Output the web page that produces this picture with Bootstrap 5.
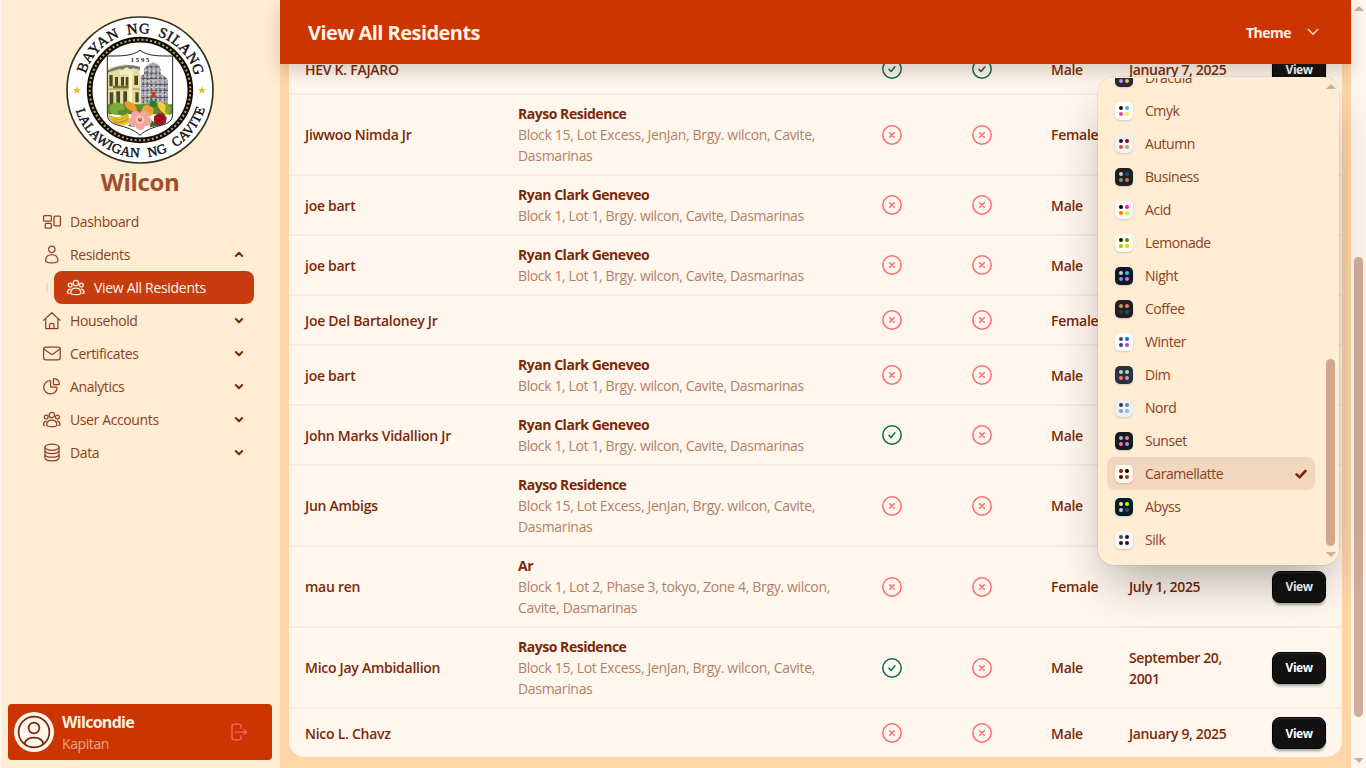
<!DOCTYPE html>
<html lang="en">
<head>
<meta charset="utf-8">
<meta name="viewport" content="width=device-width, initial-scale=1">
<title>View All Residents</title>
<link rel="stylesheet" href="https://cdn.jsdelivr.net/npm/bootstrap@5.3.0/dist/css/bootstrap.min.css">
<style>
:root{--base1:#fff7ed;--base2:#feecd3;--base3:#ffd6a7;--ink:#7c2808;--accent:#ca3500;--thumb:#d0ae9c}
body{font-family:"Open Sans","Noto Sans",sans-serif;font-size:14px;line-height:21px;color:var(--ink);background:var(--base1);height:768px;overflow:hidden}
svg{display:block;flex:none}
.stroke-icon{fill:none;stroke:currentColor;stroke-width:1.25;stroke-linecap:round;stroke-linejoin:round}
.sidebar{width:278px;margin-left:2px;background:var(--base2)}
.seal{margin:16px auto 0 64.3px;width:148px;height:148px}
.brand-name{font-size:24px;line-height:32px;font-weight:700;color:#a04f2d;margin-top:2px;letter-spacing:-.35px;padding-right:2px}
.menu{margin-top:7px;padding:0 24px 0 40px}
.menu-item{height:33px;gap:8px;color:#8c4123;letter-spacing:-.38px}
.menu-item span{margin-top:-1px}
.menu-item.lead-sub{margin-left:12px;margin-right:2px;padding:0 12px;border-radius:8px;background:#c83d10;color:#fff3e8;letter-spacing:-.3px}
.sub-wrap{position:relative}
.sub-wrap::before{content:"";position:absolute;left:4px;top:12px;width:2px;height:9px;background:#f1d9c0}
.chev{margin-left:auto;margin-right:12px;color:var(--ink)}
.user-card{margin:0 8px 8px 6px;height:56px;border-radius:4px;background:var(--accent);padding:0 24px 0 6px;gap:8px}
.avatar-ring{width:40px;height:40px;background:var(--base1);color:var(--ink)}
.user-name{font-size:16px;font-weight:700;color:#fff1e2;letter-spacing:-.7px;line-height:22px}
.user-role{color:#eda588;letter-spacing:-.4px;line-height:21px}
.content{width:1071px;background:var(--base3);position:relative}
.topbar{height:64px;background:var(--accent);color:#fff3e6;padding:0 28px;box-shadow:0 8px 16px rgba(60,40,20,.2);position:relative;z-index:2}
.topbar h1{font-size:20px;font-weight:700;margin:2px 0 0;letter-spacing:-.54px}
.theme-btn{font-weight:700;gap:15px;letter-spacing:-.5px;margin-right:3px}
.list-area{height:704px;padding:0 9px 11px}
.sheet{background:var(--base1);border-radius:0 0 16px 16px}
.residents{table-layout:fixed;width:1053px;color:var(--ink)}
.residents td{padding:0 16px;vertical-align:middle;border-bottom:2px solid #f8ebdf;font-weight:600;letter-spacing:-.27px;white-space:nowrap}
.residents tr:last-child td{border-bottom:0}
.residents td.date-cell{letter-spacing:-.37px}
.residents .mark-cell{padding:0}
.mark-cell svg{margin:0 auto}
.place{font-weight:700;letter-spacing:-.47px}
.addr{font-weight:400;color:#b37f68;letter-spacing:-.32px}
.addr.one-line{letter-spacing:-.38px}
.ok-mark{color:#0b6b4c}.no-mark{color:#ff6a6e}
.view-btn{width:54px;height:32px;border:1.5px solid #000;border-radius:8px;background:#121212;color:#fff;font-size:12px;font-weight:700;padding:1px 0 0;line-height:1;box-shadow:inset 0 1px 0 #2c2c2c,0 3px 3px -1px rgba(0,0,0,.35);letter-spacing:-.5px}
.view-btn:hover{background:#222;color:#fff}
.theme-menu{position:absolute;z-index:3;right:12px;top:77px;width:241px;height:488px;background:var(--base2);border:0;border-radius:16px;box-shadow:0 0 0 1px rgba(0,0,0,.06),0 24px 48px -10px rgba(0,0,0,.32);overflow:hidden;padding:1px 0 9px 9px}
.theme-list{width:208px;overflow:hidden}
.theme-item{height:33px;flex:none;padding:0 8px;border-radius:8px;gap:12px;color:#8c4123;letter-spacing:-.45px}
.theme-item.is-on{background:#f1d7bd}
.swatch{width:18px;height:18px;border-radius:5px;display:grid;grid-template-columns:4px 4px;gap:2px;place-content:center;box-shadow:0 1px 2px rgba(0,0,0,.15)}
.swatch i{width:4px;height:4px;border-radius:50%}
.menu-bar{margin-left:10px;width:11px;padding:6px 0 0}
.menu-bar .thumb{width:9px;height:187px;border-radius:5px;background:#d0a88c}
.tri-up,.tri-down{border:5px solid transparent;width:0;height:0}
.tri-up{border-top:0;border-bottom-color:var(--thumb)}
.tri-down{border-bottom:0;border-top-color:var(--thumb)}
.menu-bar .tri-down{margin-top:6px;margin-bottom:-1px}
.page-bar{width:15px;background:var(--base1);padding:6px 0 5px}
.page-bar .thumb{width:9px;height:460px;margin-top:246px;border-radius:5px;background:var(--thumb)}
</style>
</head>
<body>
<svg width="0" height="0" class="position-absolute">
<symbol id="i-dash" viewBox="0 0 20 20"><rect x="1.6" y="3.6" width="7.8" height="5.6" rx="1"/><rect x="3.2" y="11.4" width="6.2" height="4.8" rx="1"/><rect x="12" y="4.2" width="6.4" height="9.6" rx="1"/></symbol>
<symbol id="i-user" viewBox="0 0 20 20"><circle cx="9.8" cy="4.3" r="3.2"/><path d="M3.6 15.700c0-3.700 2.700-6.200 6.200-6.200s6.200 2.500 6.200 6.200c0 2.800-12.400 2.800-12.400 0z"/></symbol>
<symbol id="i-users" viewBox="0 0 20 20"><circle cx="9.8" cy="5.1" r="2.7"/><circle cx="4.2" cy="7.1" r="1.9"/><circle cx="15.4" cy="7.1" r="1.9"/><path d="M4.800 14.900c0-3 2.200-4.800 5-4.800s5 1.800 5 4.800c0 2.400-10 2.400-10 0zM4.200 11.100c-1.600.4-2.700 1.800-2.700 3.600 0 .4.9.7 1.600.8M15.400 11.100c1.600.4 2.700 1.800 2.700 3.600 0 .4-.9.7-1.600.8"/></symbol>
<symbol id="i-home" viewBox="0 0 20 20"><path d="M1.500 9.400 9.800 1.700l8.300 7.700M3.700 7.700v9.900h12.200V7.700M7.600 17.500v-3.400c0-1.100.7-1.800 1.700-1.800h1c1 0 1.700.7 1.700 1.800v3.400"/></symbol>
<symbol id="i-mail" viewBox="0 0 20 20"><rect x="1.600" y="3" width="16.600" height="12.800" rx="2"/><path d="m1.800 5.100 6.600 4.600c1 .6 2 .6 3 0L18 5.100"/></symbol>
<symbol id="i-pie" viewBox="0 0 20 20"><path d="M7.800 3.600a6.700 6.700 0 1 0 7.300 7.300c0-.5-.2-.7-.7-.7H9.200c-.4 0-.6-.2-.6-.6V4.300c0-.5-.3-.7-.8-.7z"/><path d="M11.400 2.300c0-.5.3-.8.800-.7a6 6 0 0 1 5.200 5.200c0 .5-.2.7-.7.7H12c-.4 0-.6-.2-.6-.6z"/></symbol>
<symbol id="i-data" viewBox="0 0 20 20"><ellipse cx="10" cy="4.200" rx="7.100" ry="3.100"/><path d="M2.900 4.200v10.600c0 4 14.200 4 14.200 0V4.200M2.900 7.600c0 4 14.200 4 14.200 0M2.900 11.200c0 4 14.200 4 14.200 0"/></symbol>
<symbol id="i-down" viewBox="0 0 10 10"><path d="m1.800 3 3.200 3.200L8.200 3"/></symbol>
<symbol id="i-up" viewBox="0 0 10 10"><path d="m1.800 6 3.200-3.200L8.200 6"/></symbol>
<symbol id="i-ok" viewBox="0 0 20 20"><circle cx="10" cy="10" r="9.200"/><path d="m6.900 10.300 2.200 2.200 3.800-4.700"/></symbol>
<symbol id="i-no" viewBox="0 0 20 20"><circle cx="10" cy="10" r="9.200"/><path d="m7.700 7.700 4.600 4.600M12.300 7.700l-4.600 4.600"/></symbol>
</svg>

<div class="d-flex h-100">
<aside class="sidebar d-flex flex-column">
  <svg class="seal" viewBox="34 35 444 444">
    <defs>
      <path id="arcTop" d="M86 257a170 170 0 0 1 340 0"/>
      <path id="arcBot" d="M54 257a202 202 0 0 0 404 0"/>
      <clipPath id="shieldClip"><path d="M160 157h193v170c0 24-14 30-34 36-24 6-48 12-63 28-14-16-38-22-62-28-20-6-34-12-34-36z"/></clipPath>
    </defs>
    <circle cx="256" cy="257" r="219" fill="#fff" stroke="#30341f" stroke-width="5"/>
    <circle cx="256" cy="257" r="151" fill="none" stroke="#0c0c0c" stroke-width="17"/>
    <circle cx="256" cy="257" r="151" fill="none" stroke="#c9a64b" stroke-width="6" stroke-dasharray="6 7"/>
    <g font-family="'Liberation Serif',serif" fill="#111" stroke="#111" stroke-width="1.300">
      <text font-size="44" word-spacing="10"><textPath href="#arcTop" startOffset="49" textLength="442">BAYAN NG SILANG</textPath></text>
      <text font-size="40" word-spacing="14"><textPath href="#arcBot" startOffset="62" textLength="516">LALAWIGAN NG CAVITE</textPath></text>
    </g>
    <path id="st" d="m67 246 3 8h9l-7 5 3 9-8-5-8 5 3-9-7-5h9z" fill="#e4bd2e"/>
    <use href="#st" x="375"/>
    <g clip-path="url(#shieldClip)">
      <path d="M157 140h200v260H157z" fill="#fff"/>
      <path d="M160 190l50-10 46 8v125h-96z" fill="#e5dda0"/>
      <path d="M158 200c20-14 70-24 98-12v8l-22-5-18 14-20-12-38 12z" fill="#777a70"/>
      <path d="M196 200l20-11 20 10v12h-40z" fill="#f0ebbd"/>
      <path d="M164 212h10v34h-10zm17 6h9v28h-9zm18 0h9v26h-9zm14 0h9v26h-9zm26-4h11v28h-11zM165 264h11v38h-11zm20-3h11v42h-11zm21 0h11v40h-11zm36 3h10v30h-10z" fill="#4a4b22"/>
      <path d="M175 244h54v9h-54z" fill="#706b3a"/><path d="M160 252h96v4h-96z" fill="#b8ab63"/>
      <path d="M222 205h10v100h-10z" fill="#faf5c4"/>
      <path d="M258 312v-98l10-6v-16l8-8 8-4 10-6 12 4 10 8v22l14 8 10 12v84z" fill="#a9a9ad"/>
      <g fill="none" stroke="#4b4d55" stroke-width="3"><path d="M260 222h76M268 206h50M262 240h78M260 258h80M260 280h80M274 188h38"/><path d="M266 212v90M278 188v112M290 184v110M304 184v110M316 194v110M330 218v84" stroke-dasharray="7 4"/></g>
      <g fill="none" stroke="#ececef" stroke-width="2"><path d="M262 230h74M270 198h46M262 250h78M262 270h78M272 212v90M284 188v100M298 186v100M310 190v100M324 218v80" stroke-dasharray="8 5"/></g>
      <path d="M160 300h194v30H160z" fill="#5f8a2c"/>
      <ellipse cx="187" cy="313" rx="22" ry="19" fill="#7cab38"/><ellipse cx="205" cy="325" rx="16" ry="9" fill="#5b8a28"/>
      <ellipse cx="228" cy="306" rx="22" ry="11" transform="rotate(35 228 306)" fill="#ed9a27"/>
      <circle cx="279" cy="319" r="18" fill="#eea232"/><path d="m284 305 4-26 8 12 10-8-2 14 13-2-17 14z" fill="#2f7a35"/><path d="M291 263h11v16h-11z" fill="#d33525"/>
      <ellipse cx="327" cy="312" rx="25" ry="11" transform="rotate(48 327 312)" fill="#f4cd35"/><path d="m335 292 14 18-4 24-14-12z" fill="#85a832"/>
      <path d="M162 330c20 14 40 8 58-4l8 26c-20 20-50 12-66-8z" fill="#e9c535"/><path d="M166 334c20 18 40 12 54-2M172 346c18 10 32 8 48-4M180 354c16 4 28 0 40-8" fill="none" stroke="#a8841f" stroke-width="2"/>
      <path d="m284 345 18 10 20 8-36 6zm-42 22-22-2 14-14z" fill="#2f6b2b"/>
      <path d="m298 336 14-10 16 2 8 12-2 14-12 10-16-2-8-10z" fill="#a31722"/><path d="M306 338c8-8 20 0 16 8s-14 6-12-2" fill="none" stroke="#5e0c14" stroke-width="3"/>
      <g fill="#f2a5a3"><circle cx="243" cy="333" r="14"/><circle cx="268" cy="332" r="14"/><circle cx="277" cy="351" r="14"/><circle cx="257" cy="363" r="14"/><circle cx="236" cy="352" r="14"/></g>
      <circle cx="256" cy="346" r="13" fill="#fac9c0"/><circle cx="256" cy="346" r="6" fill="#c83a4e"/><path d="m256 346 6-16" stroke="#e5c44c" stroke-width="4"/>
    </g>
    <path d="M158 155c40 0 74 1 98-17 24 18 58 17 98 17v172c0 24-14 30-34 36-24 6-48 14-64 30-16-16-40-24-64-30-20-6-34-12-34-36z" fill="none" stroke="#222" stroke-width="3"/>
    <text x="228" y="172" font-family="'Liberation Serif',serif" font-size="20" font-weight="700" fill="#222" textLength="56">1595</text>
  </svg>
  <div class="brand-name text-center">Wilcon</div>
  <nav class="menu d-flex flex-column" id="menu"></nav>
  <div class="user-card d-flex align-items-center mt-auto">
    <div class="avatar-ring rounded-circle d-flex align-items-center justify-content-center">
      <svg class="stroke-icon" width="34" height="34" viewBox="0 0 34 34" style="stroke-width:1.700"><circle cx="17" cy="17" r="15.400"/><circle cx="17" cy="13" r="5.400"/><path d="M7.600 29c1-5 5-6.300 9.400-6.300s8.400 1.300 9.400 6.300"/></svg>
    </div>
    <div><div class="user-name">Wilcondie</div><div class="user-role">Kapitan</div></div>
    <svg class="stroke-icon ms-auto" width="18" height="18" viewBox="0 0 18 18" style="color:#ff6266"><path d="M11 5.300V3.600C11 2 10 1.200 8.600 1.200H4.400C2.900 1.200 2 2 2 3.600v10.800c0 1.600.9 2.400 2.400 2.400h4.200c1.400 0 2.400-.8 2.400-2.400v-1.700M5.600 9h10.800M14 6.400 16.600 9 14 11.600"/></svg>
  </div>
</aside>

<main class="content d-flex flex-column">
  <header class="topbar d-flex align-items-center justify-content-between">
    <h1>View All Residents</h1>
    <div class="theme-btn d-flex align-items-center" role="button"><span>Theme</span>
      <svg class="stroke-icon" width="14" height="14" viewBox="0 0 14 14"><path d="m2.200 4.400 4.800 4.800 4.800-4.800"/></svg></div>
  </header>
  <section class="list-area d-flex flex-column justify-content-end overflow-hidden">
    <div class="sheet">
      <table class="residents">
        <colgroup><col style="width:213px"><col style="width:353px"><col style="width:74px"><col style="width:106px"><col style="width:78px"><col style="width:143px"><col style="width:86px"></colgroup>
        <tbody id="rows"></tbody>
      </table>
    </div>
  </section>
  <div class="theme-menu d-flex">
    <div class="theme-list d-flex flex-column justify-content-end" id="themes"></div>
    <div class="menu-bar d-flex flex-column align-items-center"><span class="tri-up"></span><span class="thumb mt-auto"></span><span class="tri-down"></span></div>
  </div>
</main>
<div class="page-bar d-flex flex-column align-items-center"><span class="tri-up"></span><span class="thumb"></span><span class="tri-down mt-auto"></span></div>
</div>

<script>
const icon = (id, size, cls, w) => `<svg class="stroke-icon ${cls || ''}" width="${size}" height="${size}"${w ? ` style="stroke-width:${w}"` : ''}><use href="#${id}"/></svg>`;

document.getElementById('menu').innerHTML = [
  ['i-dash', 'Dashboard'], ['i-user', 'Residents', 'i-up'], ['i-users', 'View All Residents', 'sub'],
  ['i-home', 'Household', 'i-down'], ['i-mail', 'Certificates', 'i-down'], ['i-pie', 'Analytics', 'i-down'],
  ['i-users', 'User Accounts', 'i-down'], ['i-data', 'Data', 'i-down']
].map(([ic, label, end]) => end === 'sub'
  ? `<div class="sub-wrap"><div class="menu-item lead-sub d-flex align-items-center">${icon(ic, 20)}<span>${label}</span></div></div>`
  : `<div class="menu-item d-flex align-items-center">${icon(ic, 20)}<span>${label}</span>${end ? icon(end, 10, 'chev', 2) : ''}</div>`).join('');

const rayso = ['Rayso Residence', 'Block 15, Lot Excess, JenJan, Brgy. wilcon, Cavite,<br>Dasmarinas'];
const ryan = ['Ryan Clark Geneveo', 'Block 1, Lot 1, Brgy. wilcon, Cavite, Dasmarinas'];
document.getElementById('rows').innerHTML = [
  [49, 'HEV K. FAJARO', null, 1, 1, 'Male', 'January 7, 2025'],
  [81, 'Jiwwoo Nimda Jr', rayso, 0, 0, 'Female', ''],
  [60, 'joe bart', ryan, 0, 0, 'Male', ''],
  [60, 'joe bart', ryan, 0, 0, 'Male', ''],
  [50, 'Joe Del Bartaloney Jr', null, 0, 0, 'Female', ''],
  [60, 'joe bart', ryan, 0, 0, 'Male', ''],
  [60, 'John Marks Vidallion Jr', ryan, 1, 0, 'Male', ''],
  [81, 'Jun Ambigs', rayso, 0, 0, 'Male', ''],
  [81, 'mau ren', ['Ar', 'Block 1, Lot 2, Phase 3, tokyo, Zone 4, Brgy. wilcon,<br>Cavite, Dasmarinas'], 0, 0, 'Female', 'July 1, 2025'],
  [81, 'Mico Jay Ambidallion', rayso, 1, 0, 'Male', 'September 20,<br>2001'],
  [49, 'Nico L. Chavz', null, 0, 0, 'Male', 'January 9, 2025']
].map(([h, name, home, a, b, sex, date]) => {
  const mark = on => `<td class="mark-cell">${on ? icon('i-ok', 20, 'ok-mark', 1.5) : icon('i-no', 20, 'no-mark', 1.5)}</td>`;
  return `<tr style="height:${h}px"><td>${name}</td><td>${home ? `<div class="place">${home[0]}</div><div class="addr${home === ryan ? ' one-line' : ''}">${home[1]}</div>` : ''}</td>${mark(a)}${mark(b)}<td>${sex}</td><td class="date-cell">${date}</td><td>${date ? '<button class="btn view-btn">View</button>' : ''}</td></tr>`;
}).join('');

document.getElementById('themes').innerHTML = [
  ['Dracula', '#282a36', '#f8f8f2', '#ff79c6', '#bd93f9', '#ffb86c'],
  ['Cmyk', '#fff', '#161616', '#45aeee', '#e8488a', '#fff232'],
  ['Autumn', '#f1f1f1', '#191919', '#8c0327', '#d85251', '#d59b6b'],
  ['Business', '#202020', '#cdcdcd', '#1c4f82', '#7d919b', '#eb6b47'],
  ['Acid', '#f8f8f8', '#000', '#ff00ff', '#ff7400', '#cbfd03'],
  ['Lemonade', '#f8fdef', '#151614', '#419400', '#bdc000', '#ebd000'],
  ['Night', '#0f172a', '#c9cbd0', '#3abdf7', '#818cf8', '#f471b5'],
  ['Coffee', '#261b25', '#c59f61', '#db924c', '#263e3f', '#10576d'],
  ['Winter', '#fff', '#394e6a', '#0069ff', '#463aa2', '#c148ac'],
  ['Dim', '#2a303c', '#b2ccd6', '#9fe88d', '#ff7d5c', '#c792e9'],
  ['Nord', '#eceff4', '#2e3440', '#5e81ac', '#81a1c1', '#88c0d0'],
  ['Sunset', '#121c22', '#9fb9d0', '#ff865b', '#fd6f9c', '#b387fa'],
  ['Caramellatte', '#fff7ed', '#7c2808', '#000', '#370d04', '#8f3b20'],
  ['Abyss', '#001e29', '#ffd6a7', '#bfff00', '#c8bdf0', '#4a4a4a'],
  ['Silk', '#f7f5f3', '#4b4743', '#1c1c29', '#1c1c29', '#1c1c29']
].map(([name, bg, ...dots]) => `<div class="theme-item d-flex align-items-center${name === 'Caramellatte' ? ' is-on' : ''}"><span class="swatch" style="background:${bg}">${dots.map(c => `<i style="background:${c}"></i>`).join('')}</span><span>${name}</span>${name === 'Caramellatte' ? '<svg class="stroke-icon ms-auto" width="12" height="12" viewBox="0 0 12 12" style="stroke-width:2.600;color:#7c2808"><path d="m1.600 6.400 3 2.900 5.800-6.300"/></svg>' : ''}</div>`).join('');
</script>
<script src="https://cdn.jsdelivr.net/npm/bootstrap@5.3.0/dist/js/bootstrap.bundle.min.js"></script>
</body>
</html>
